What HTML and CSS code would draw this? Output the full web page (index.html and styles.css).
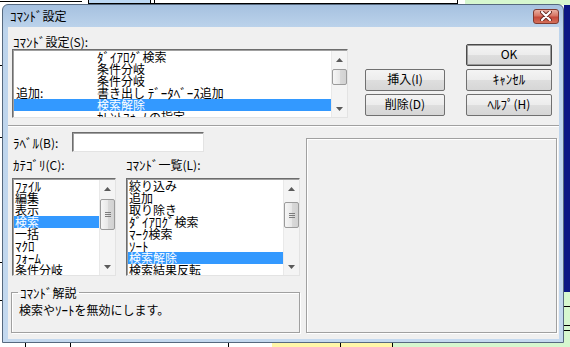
FILE: index.html
```html
<!DOCTYPE html>
<html lang="ja">
<head>
    <meta charset="UTF-8">
    <title>ｺﾏﾝﾄﾞ設定</title>
    <link rel="stylesheet" href="styles.css">
</head>
<body>
<div class="desktop">
    <div class="window">
        <div class="titlebar">
            <span class="title"><span class="k">ｺﾏﾝﾄﾞ</span>設定</span>
            <button class="close">
                <svg width="12" height="10" viewBox="0 0 12 10">
                    <path d="M2 1 L10 9 M10 1 L2 9" stroke="#6b2a22" stroke-width="4" stroke-linecap="round"/>
                    <path d="M2 1 L10 9 M10 1 L2 9" stroke="#fff" stroke-width="2.2" stroke-linecap="round"/>
                </svg>
            </button>
        </div>
        <div class="client">
            <div class="top">
                <div class="setting">
                    <div class="label"><span class="k">ｺﾏﾝﾄﾞ</span>設定(S):</div>
                    <div class="listbox list-setting">
                        <ul class="items">
                            <li><span class="c1"></span><span class="k">ﾀﾞｲｱﾛｸﾞ</span>検索</li>
                            <li><span class="c1"></span>条件分岐</li>
                            <li><span class="c1"></span>条件分岐</li>
                            <li><span class="c1">追加:</span>書き出し <span class="k">ﾃﾞｰﾀﾍﾞｰｽ</span>追加</li>
                            <li class="sel"><span class="c1"></span>検索解除</li>
                            <li><span class="c1"></span><span class="k">ｶﾚﾝﾄﾌｫｰﾑ</span>の指定</li>
                        </ul>
                        <div class="scrollbar">
                            <div class="sb-btn"><svg width="7" height="4"><path d="M0 4 L3.5 0 L7 4 Z" fill="#5a5a5a"/></svg></div>
                            <div class="sb-track"><div class="thumb thumb-small"></div></div>
                            <div class="sb-btn"><svg width="7" height="4"><path d="M0 0 L3.5 4 L7 0 Z" fill="#5a5a5a"/></svg></div>
                        </div>
                    </div>
                </div>
                <div class="buttons">
                    <span></span>
                    <button class="btn default">OK</button>
                    <button class="btn">挿入(I)</button>
                    <button class="btn"><span class="k">ｷｬﾝｾﾙ</span></button>
                    <button class="btn">削除(D)</button>
                    <button class="btn"><span class="k">ﾍﾙﾌﾟ</span>(H)</button>
                </div>
            </div>
            <div class="separator"></div>
            <div class="bottom">
                <div class="left">
                    <div class="label-row">
                        <span class="label-name"><span class="k">ﾗﾍﾞﾙ</span>(B):</span>
                        <div class="input"></div>
                    </div>
                    <div class="lists">
                        <div class="col col-cat">
                            <div class="label"><span class="k">ｶﾃｺﾞﾘ</span>(C):</div>
                            <div class="listbox">
                                <ul class="items">
                                    <li><span class="k">ﾌｧｲﾙ</span></li>
                                    <li>編集</li>
                                    <li>表示</li>
                                    <li class="sel">検索</li>
                                    <li>一括</li>
                                    <li><span class="k">ﾏｸﾛ</span></li>
                                    <li><span class="k">ﾌｫｰﾑ</span></li>
                                    <li>条件分岐</li>
                                </ul>
                                <div class="scrollbar">
                                    <div class="sb-btn"><svg width="7" height="4"><path d="M0 4 L3.5 0 L7 4 Z" fill="#5a5a5a"/></svg></div>
                                    <div class="sb-track"><div class="thumb thumb-cat"><span class="grip"></span></div></div>
                                    <div class="sb-btn"><svg width="7" height="4"><path d="M0 0 L3.5 4 L7 0 Z" fill="#5a5a5a"/></svg></div>
                                </div>
                            </div>
                        </div>
                        <div class="col col-cmd">
                            <div class="label"><span class="k">ｺﾏﾝﾄﾞ</span>一覧(L):</div>
                            <div class="listbox">
                                <ul class="items">
                                    <li>絞り込み</li>
                                    <li>追加</li>
                                    <li>取り除き</li>
                                    <li><span class="k">ﾀﾞｲｱﾛｸﾞ</span>検索</li>
                                    <li><span class="k">ﾏｰｸ</span>検索</li>
                                    <li><span class="k">ｿｰﾄ</span></li>
                                    <li class="sel">検索解除</li>
                                    <li>検索結果反転</li>
                                </ul>
                                <div class="scrollbar">
                                    <div class="sb-btn"><svg width="7" height="4"><path d="M0 4 L3.5 0 L7 4 Z" fill="#5a5a5a"/></svg></div>
                                    <div class="sb-track"><div class="thumb thumb-cmd"><span class="grip"></span></div></div>
                                    <div class="sb-btn"><svg width="7" height="4"><path d="M0 0 L3.5 4 L7 0 Z" fill="#5a5a5a"/></svg></div>
                                </div>
                            </div>
                        </div>
                    </div>
                    <fieldset class="group">
                        <legend><span class="k">ｺﾏﾝﾄﾞ</span>解説</legend>
                        <p>検索や<span class="k">ｿｰﾄ</span>を無効にします。</p>
                    </fieldset>
                </div>
                <div class="panel"></div>
            </div>
        </div>
    </div>
</div>
</body>
</html>
```

FILE: styles.css
```css
* {
    box-sizing: border-box;
}
body {
    margin: 0;
    font-family: "Noto Sans CJK JP", sans-serif;
    font-size: 12px;
    color: #000;
}
/* half-width kana come out small in Noto, so lift them a little */
.k {
    font-size: 13px;
}
/* the spreadsheet showing round the dialog */
.desktop {
    position: relative;
    width: 570px;
    height: 347px;
    overflow: hidden;
    background:
        linear-gradient(#0b1784, #0b1784) 564px 5px / 6px 287px no-repeat,
        linear-gradient(#000, #000) 564px 306px / 6px 1px no-repeat,
        linear-gradient(#000, #000) 564px 325px / 6px 1px no-repeat,
        linear-gradient(#000, #000) 564px 330px / 6px 1px no-repeat,
        linear-gradient(#d6f7cf, #d6f7cf) 564px 292px / 6px 55px no-repeat,
        linear-gradient(#000, #000) 0 1px / 82px 1px no-repeat,
        linear-gradient(#000, #000) 88px 3px / 370px 1px no-repeat,
        linear-gradient(#000, #000) 88px 0 / 1px 4px no-repeat,
        linear-gradient(#000, #000) 150px 0 / 1px 4px no-repeat,
        linear-gradient(#000, #000) 154px 0 / 1px 4px no-repeat,
        linear-gradient(#000, #000) 457px 0 / 1px 4px no-repeat,
        linear-gradient(#bcd8f4, #bcd8f4) 89px 0 / 61px 3px no-repeat,
        linear-gradient(#d6f7cf, #d6f7cf) 465px 0 / 105px 5px no-repeat,
        linear-gradient(#000, #000) 25px 343px / 1px 4px no-repeat,
        linear-gradient(#000, #000) 70px 343px / 1px 4px no-repeat,
        linear-gradient(#000, #000) 228px 343px / 1px 4px no-repeat,
        linear-gradient(#000, #000) 340px 343px / 1px 4px no-repeat,
        linear-gradient(#000, #000) 392px 343px / 1px 4px no-repeat,
        linear-gradient(#fff6a8, #fff6a8) 272px 343px / 120px 4px no-repeat,
        linear-gradient(#d6f7cf, #d6f7cf) 393px 343px / 177px 4px no-repeat,
        linear-gradient(#000, #000) 0 65px / 2px 1px no-repeat,
        linear-gradient(#000, #000) 0 137px / 2px 1px no-repeat,
        linear-gradient(#000, #000) 0 262px / 2px 1px no-repeat,
        linear-gradient(#000, #000) 0 300px / 2px 1px no-repeat,
        #fff;
}
.window {
    position: absolute;
    left: 2px;
    top: 4px;
    width: 562px;
    height: 339px;
    border: 1px solid #56697f;
    border-radius: 6px 6px 0 0;
    background: linear-gradient(#a6c1e0, #bdd4ec 24px, #c4d9ef);
    display: flex;
    flex-direction: column;
}
.titlebar {
    height: 22px;
    display: flex;
    align-items: center;
    justify-content: space-between;
    padding: 0 4px 0 7px;
}
.title {
    line-height: 14px;
}
.close {
    width: 26px;
    height: 15px;
    padding: 0;
    border: 1px solid #7f3a30;
    border-radius: 3px;
    background: linear-gradient(#eab0a2, #d77563 45%, #c5493a 55%, #d4705a);
    display: flex;
    align-items: center;
    justify-content: center;
}
.client {
    height: 312px;
    margin: 0 4px 3px 5px;
    background: #f0f0f0;
    display: flex;
    flex-direction: column;
}
.label {
    height: 13px;
    line-height: 13px;
    white-space: nowrap;
}
.top {
    height: 98px;
    display: flex;
}
.setting {
    padding: 8px 0 0 4px;
}
.setting .label {
    padding-left: 1px;
}
.list-setting {
    margin-top: 1px;
    width: 336px;
    height: 69px;
}
.buttons {
    margin-left: 17px;
    padding-top: 17px;
    display: grid;
    grid-template-columns: 80px 86px;
    grid-template-rows: 22px 22px 22px;
    column-gap: 21px;
    row-gap: 3px;
    align-content: start;
}
.btn {
    font-family: inherit;
    font-size: 12px;
    line-height: 14px;
    color: #000;
    padding: 0 0 2px;
    border: 1px solid #707070;
    border-radius: 2px;
    background: linear-gradient(#f4f4f4, #ececec 50%, #dedede 51%, #d6d6d6);
}
.btn.default {
    border-color: #4a4a4a;
    box-shadow: inset 0 0 0 1px #9a9a9a;
}
.separator {
    height: 2px;
    border-top: 1px solid #a0a0a0;
    border-bottom: 1px solid #fff;
}
.bottom {
    flex: 1;
    display: flex;
}
.left {
    width: 292px;
    padding-left: 3px;
}
.label-row {
    display: flex;
    align-items: center;
    margin-top: 5px;
    height: 20px;
}
.label-name {
    width: 61px;
    padding-left: 2px;
}
.input {
    width: 132px;
    height: 20px;
    background: #fff;
    border: 1px solid;
    border-color: #6d6d6d #e3e3e3 #e3e3e3 #6d6d6d;
    box-shadow: inset 1px 1px 0 #a0a0a0;
}
.lists {
    display: flex;
    margin-top: 6px;
}
.col-cat {
    width: 105px;
    padding-left: 1px;
}
.col-cat .label {
    padding-left: 1px;
}
.col-cmd {
    width: 174px;
    margin-left: 10px;
}
.col .listbox {
    margin-top: 7px;
    height: 98px;
}
.listbox {
    display: flex;
    background: #fff;
    border: 1px solid;
    border-color: #6d6d6d #e3e3e3 #e3e3e3 #6d6d6d;
    padding: 1px 0 0 1px;
    box-shadow: inset 1px 1px 0 #a0a0a0;
}
.items {
    flex: 1;
    list-style: none;
    margin: 0;
    padding: 0;
    overflow: hidden;
}
.items li {
    height: 12px;
    line-height: 12px;
    padding-left: 1px;
    white-space: nowrap;
}
.list-setting .items li {
    padding-left: 2px;
}
.items li.sel {
    background: #3399ff;
    color: #fff;
}
.c1 {
    display: inline-block;
    width: 81px;
}
.scrollbar {
    width: 16px;
    display: flex;
    flex-direction: column;
    background: #f4f4f4;
    border-left: 1px solid #e9e9e9;
}
.sb-btn {
    height: 17px;
    flex: none;
    display: flex;
    align-items: center;
    justify-content: center;
}
.sb-track {
    flex: 1;
}
.thumb {
    border: 1px solid #9b9b9b;
    border-radius: 2px;
    background: linear-gradient(to right, #f6f6f6, #e8e8e8 50%, #d9d9d9 51%, #d2d2d2);
    display: flex;
    align-items: center;
    justify-content: center;
}
.thumb-small {
    margin-top: 1px;
    height: 16px;
}
.thumb-cat {
    margin-top: 2px;
    height: 31px;
}
.thumb-cmd {
    margin-top: 5px;
    height: 26px;
}
.grip {
    width: 6px;
    height: 5px;
    background: repeating-linear-gradient(#7d7d7d 0 1px, transparent 1px 2px);
}
.group {
    margin: 10px 0 0 0;
    padding: 0 0 0 6px;
    width: 289px;
    height: 47px;
    border: 1px solid #a0a0a0;
    box-shadow: inset 1px 1px 0 #fff, 1px 1px 0 #fff;
}
.group legend {
    padding: 0 2px;
    line-height: 13px;
}
.group p {
    margin: 4px 0 0;
    padding-left: 1px;
    line-height: 13px;
}
.panel {
    flex: none;
    width: 251px;
    height: 195px;
    margin: 11px 0 0 6px;
    border: 1px solid #a0a0a0;
    box-shadow: inset 1px 1px 0 #fff, 1px 1px 0 #fff;
}
```
